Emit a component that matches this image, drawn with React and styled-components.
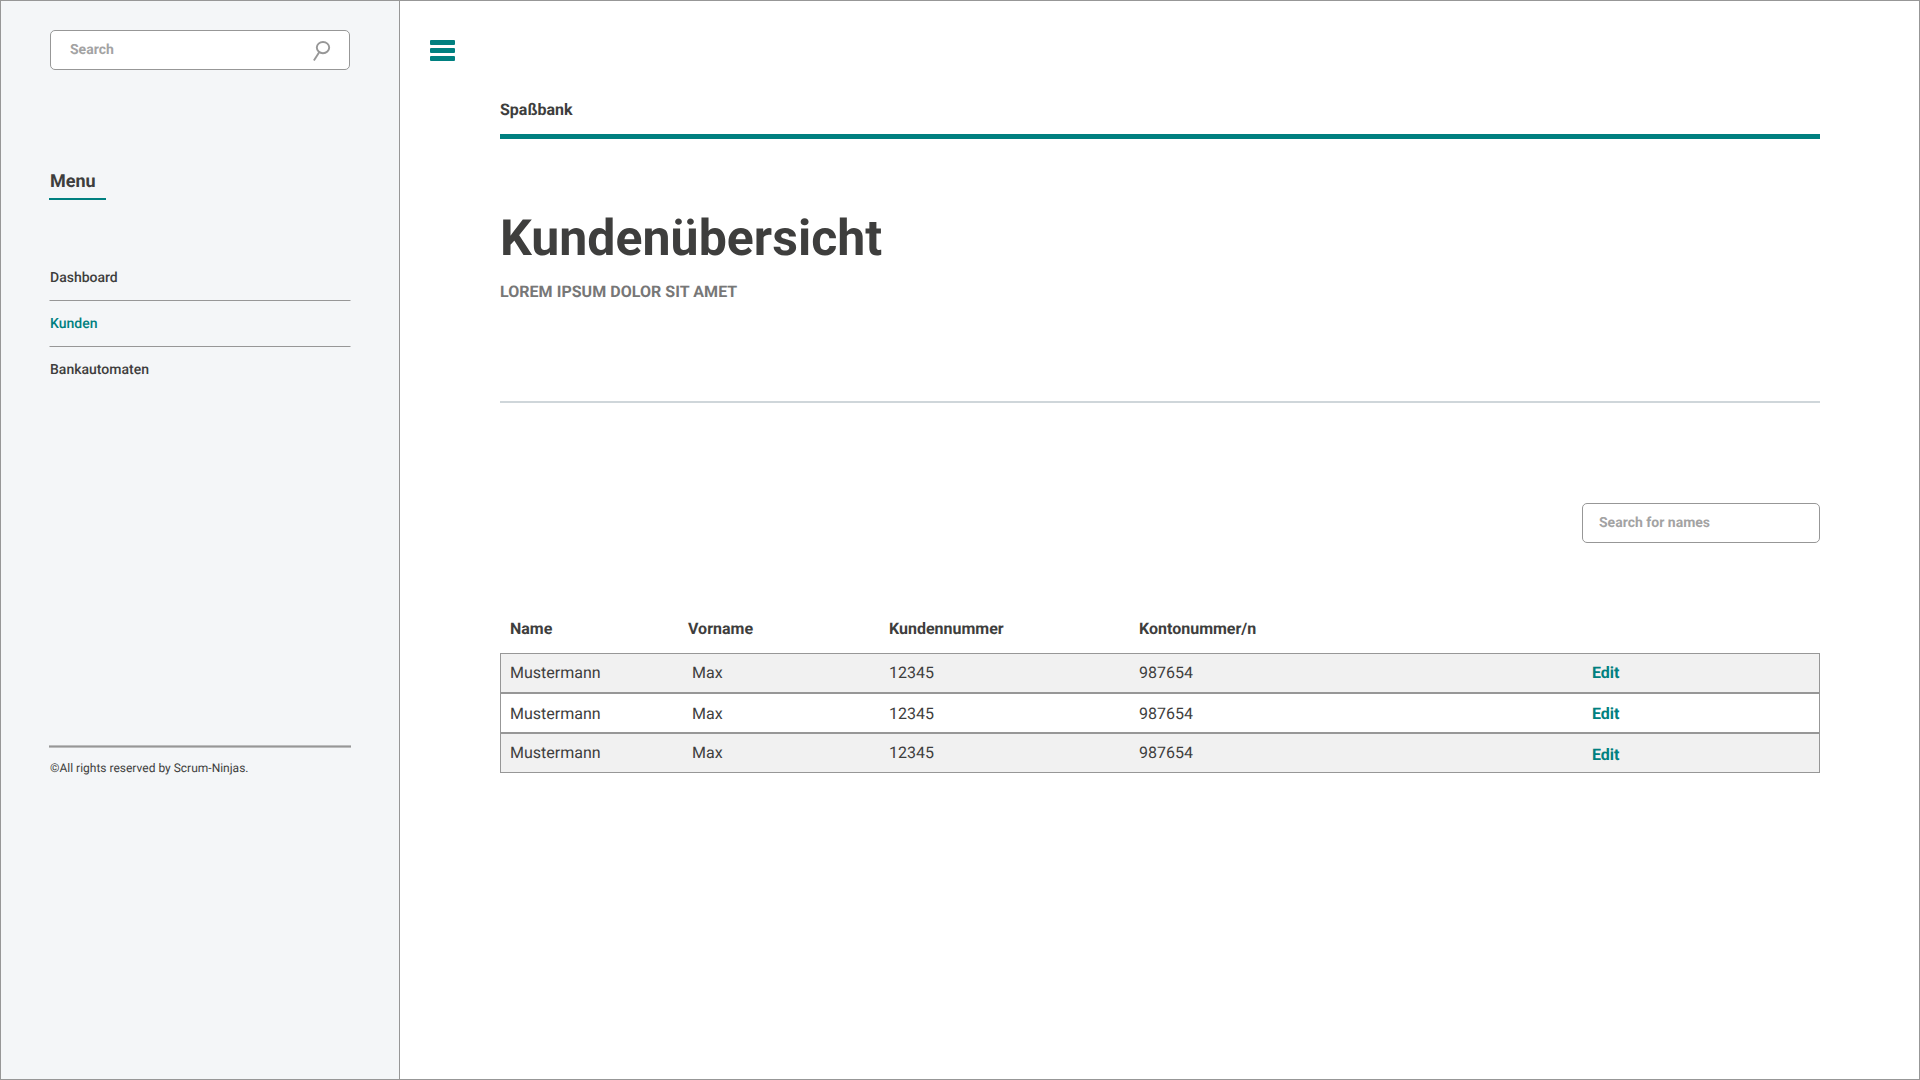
import React from "react";
import styled, { createGlobalStyle } from "styled-components";

const color = {
  line: "#979797",
  teal: "#008080",
  ink: "#3e3e3d",
  side: "#f4f6f8",
  hint: "#a3a3a3",
};

const GlobalStyle = createGlobalStyle`
  *, *::before, *::after { box-sizing: border-box; }
  body {
    margin: 0;
    background: #fff;
    color: ${color.ink};
    font-family: Roboto, "Liberation Sans", sans-serif;
    font-size: 16px;
    line-height: 20px;
    text-rendering: geometricPrecision;
  }
`;

const Page = styled.div`
  display: flex;
  width: 1920px;
  height: 1080px;
  border: 1px solid ${color.line};
`;

const Sidebar = styled.aside`
  flex: 0 0 399px;
  padding: 29px 48px 0;
  background: ${color.side};
  border-right: 1px solid ${color.line};
`;

const SearchField = styled.label`
  display: flex;
  align-items: center;
  width: ${(p) => p.$width}px;
  height: 40px;
  padding: 0 19px 0 ${(p) => p.$indent}px;
  background: #fff;
  border: 1px solid ${color.line};
  border-radius: 5px;
`;

const SearchInput = styled.input`
  flex: 1;
  min-width: 0;
  height: 38px;
  padding: 0;
  border: 0;
  outline: 0;
  background: transparent;
  font: 700 14px Roboto, "Liberation Sans", sans-serif;
  color: ${color.ink};
  text-rendering: geometricPrecision;

  &::placeholder {
    color: ${color.hint};
    opacity: 1;
  }
`;

const SideSearch = styled.div`
  padding-left: 1px;
`;

const MenuTitle = styled.h2`
  width: 57px;
  margin: 101px 0 0;
  padding: 0 0 5px 1px;
  border-bottom: 2px solid ${color.teal};
  font-size: 18px;
  font-weight: 700;
  line-height: 22px;
`;

const MenuList = styled.ul`
  margin: 55px 0 0;
  padding: 0;
  list-style: none;
`;

const MenuItem = styled.li`
  padding: 13px 1px 13px;
  background: linear-gradient(
      to right,
      #c6c7c8 1px,
      ${color.line} 1px calc(100% - 1px),
      #c6c7c8 calc(100% - 1px)
    )
    bottom / 100% 1px no-repeat;
  font-size: 14px;
  font-weight: 500;
  color: ${(p) => (p.$active ? color.teal : color.ink)};

  &:last-child {
    padding-bottom: 12px;
    background: none;
  }
`;

const Copyright = styled.footer`
  margin-top: 353px;
  padding: 15px 1px 0;
  background: linear-gradient(#bcbdbe 1px, ${color.line} 1px 2px, #bcbdbe 2px) top / 100% 3px no-repeat;
  font-size: 12px;
  line-height: 16px;
`;

const Main = styled.main`
  flex: 1;
  padding: 39px 99px 0 30px;
`;

const MenuToggle = styled.button`
  display: grid;
  gap: 3px;
  width: 25px;
  padding: 0;
  border: 0;
  background: none;
`;

const ToggleBar = styled.span`
  height: 5px;
  border-radius: 1px;
  background: ${color.teal};
`;

const Content = styled.div`
  margin-left: 70px;
`;

const Brand = styled.header`
  margin-top: 39px;
  padding-bottom: 14px;
  border-bottom: 5px solid ${color.teal};
  font-weight: 700;
`;

const Intro = styled.section`
  padding: 70px 0 99px;
  border-bottom: 2px solid #cfd6da;
`;

const Title = styled.h1`
  margin: 0;
  font-size: 50px;
  font-weight: 700;
  line-height: 60px;
  letter-spacing: 0.03px;
`;

const Subtitle = styled.p`
  margin: 13px 0 0;
  font-weight: 700;
  letter-spacing: 0.04px;
  color: #777;
`;

const Tools = styled.div`
  display: flex;
  justify-content: flex-end;
  margin: 100px 0 76px;
`;

const Columns = styled.div`
  display: grid;
  grid-template-columns: 178px 201px 250px 453px 1fr;
`;

const HeadRow = styled(Columns)`
  padding-left: 10px;
  height: 34px;
  font-weight: 700;
`;

const Row = styled(Columns)`
  height: 40px;
  padding: ${(p) => p.$top}px 0 0 9px;
  border: 1px solid ${color.line};
  background: ${(p) => (p.$shaded ? "#f1f1f1" : "#fff")};
`;

const Cell = styled.span`
  padding-left: ${(p) => p.$indent || 0}px;
`;

const EditLink = styled.a`
  padding-top: ${(p) => p.$drop || 0}px;
  font-weight: 700;
  color: ${color.teal};
`;

const Glass = styled.svg`
  flex: none;
  overflow: visible;
`;

const customers = [
  { top: 9, shaded: true },
  { top: 10, shaded: false },
  { top: 9, shaded: true, drop: 2 },
].map((r) => ({ ...r, name: "Mustermann", first: "Max", id: "12345", account: "987654" }));

function Magnifier() {
  return (
    <Glass width="18" height="22" viewBox="0 0 18 22" fill="none" stroke={color.line} strokeWidth="1.9">
      <ellipse cx="11" cy="8.6" rx="6.2" ry="5.6" />
      <path d="M7.2 13.2 L1.9 21.5" />
    </Glass>
  );
}

export default function App() {
  return (
    <>
      <GlobalStyle />
      <Page>
        <Sidebar>
          <SideSearch>
            <SearchField $width={300} $indent={19}>
              <SearchInput placeholder="Search" />
              <Magnifier />
            </SearchField>
          </SideSearch>
          <MenuTitle>Menu</MenuTitle>
          <MenuList>
            <MenuItem>Dashboard</MenuItem>
            <MenuItem $active>Kunden</MenuItem>
            <MenuItem>Bankautomaten</MenuItem>
          </MenuList>
          <Copyright>©All rights reserved by Scrum-Ninjas.</Copyright>
        </Sidebar>
        <Main>
          <MenuToggle aria-label="Menu">
            <ToggleBar />
            <ToggleBar />
            <ToggleBar />
          </MenuToggle>
          <Content>
            <Brand>Spaßbank</Brand>
            <Intro>
              <Title>Kundenübersicht</Title>
              <Subtitle>LOREM IPSUM DOLOR SIT AMET</Subtitle>
            </Intro>
            <Tools>
              <SearchField $width={238} $indent={16}>
                <SearchInput placeholder="Search for names" />
              </SearchField>
            </Tools>
            <HeadRow>
              <Cell>Name</Cell>
              <Cell>Vorname</Cell>
              <Cell>Kundennummer</Cell>
              <Cell>Kontonummer/n</Cell>
            </HeadRow>
            {customers.map((c, i) => (
              <Row key={i} $top={c.top} $shaded={c.shaded}>
                <Cell>{c.name}</Cell>
                <Cell $indent={4}>{c.first}</Cell>
                <Cell>{c.id}</Cell>
                <Cell>{c.account}</Cell>
                <EditLink $drop={c.drop}>Edit</EditLink>
              </Row>
            ))}
          </Content>
        </Main>
      </Page>
    </>
  );
}
